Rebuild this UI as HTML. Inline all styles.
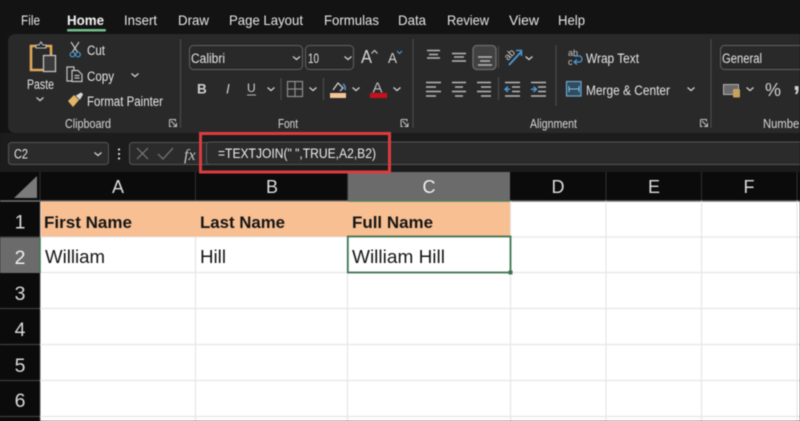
<!DOCTYPE html>
<html lang="en"><head><meta charset="utf-8"><title>Excel TEXTJOIN</title>
<style>
html,body{margin:0;padding:0;background:#131313;width:800px;height:421px;overflow:hidden}
svg{display:block;filter:blur(.5px)}
text{font-family:"Liberation Sans",sans-serif;fill:#e6e6e6;font-size:13.5px}
.tab{font-size:14px}
.lb{font-size:12.5px;fill:#d8d8d8}
.g{fill:none;stroke:#c4c4c4;stroke-width:1.2}
.l{stroke:#b8b8b8;stroke-width:1.6}
.s{stroke:#4a4a4a;stroke-width:1.2}
.h{fill:#dcdcdc;font-size:18px;text-anchor:middle}
.n{fill:#d8d8d8;font-size:19.5px;text-anchor:middle}
.b{fill:#151515;font-size:17px;font-weight:bold}
.t{fill:#151515;font-size:18px}
</style></head><body>
<svg width="800" height="421" viewBox="0 0 800 421" xmlns="http://www.w3.org/2000/svg">
<defs><path id="v" d="M-3.5-1.500 0 1.500 3.500-1.500" fill="none" stroke="#d0d0d0" stroke-width="1.300"/></defs>
<rect width="800" height="421" fill="#131313"/>
<!-- tabs -->
<text class="tab" x="21" y="25" textLength="19" lengthAdjust="spacingAndGlyphs">File</text>
<text class="tab" x="67" y="25" textLength="37" lengthAdjust="spacingAndGlyphs" style="font-weight:bold;fill:#f2f2f2">Home</text>
<text class="tab" x="124" y="25" textLength="33" lengthAdjust="spacingAndGlyphs">Insert</text>
<text class="tab" x="178" y="25" textLength="31" lengthAdjust="spacingAndGlyphs">Draw</text>
<text class="tab" x="229" y="25" textLength="74" lengthAdjust="spacingAndGlyphs">Page Layout</text>
<text class="tab" x="324" y="25" textLength="55" lengthAdjust="spacingAndGlyphs">Formulas</text>
<text class="tab" x="398" y="25" textLength="28" lengthAdjust="spacingAndGlyphs">Data</text>
<text class="tab" x="447" y="25" textLength="42" lengthAdjust="spacingAndGlyphs">Review</text>
<text class="tab" x="509" y="25" textLength="30" lengthAdjust="spacingAndGlyphs">View</text>
<text class="tab" x="558" y="25" textLength="27" lengthAdjust="spacingAndGlyphs">Help</text>
<rect x="67" y="29" width="39" height="2.500" rx="1" fill="#73c08e"/>
<!-- ribbon -->
<rect x="8" y="34" width="800" height="99" rx="7" fill="#292929"/>
<!-- paste -->
<path d="M31 46h20v24h-20z" fill="none" stroke="#e0a85a" stroke-width="2.600"/>
<path d="M36 47v-2h3l2-3 2 3h3v3h-10z" fill="#292929" stroke="#bdbdbd" stroke-width="1.100"/>
<rect x="43.500" y="55.500" width="12" height="16" fill="#3a3a3a" stroke="#c4c4c4" stroke-width="1.300"/>
<text x="27" y="89" textLength="27" lengthAdjust="spacingAndGlyphs">Paste</text>
<use href="#v" x="40" y="99"/>
<!-- clipboard commands -->
<path d="M71 42l6.500 10M79 42l-6.500 10" class="g"/>
<circle cx="72.500" cy="54.500" r="2.300" fill="none" stroke="#4d9ad6" stroke-width="1.200"/>
<circle cx="78" cy="54.500" r="2.300" fill="none" stroke="#4d9ad6" stroke-width="1.200"/>
<text x="87" y="55" textLength="18" lengthAdjust="spacingAndGlyphs">Cut</text>
<path d="M72 81h-5v-14h7v3" class="g"/><path d="M72 70.500h6l4 4v7h-10zM74.500 75.500h5M74.500 78h5" class="g"/>
<text x="87" y="81" textLength="27" lengthAdjust="spacingAndGlyphs">Copy</text>
<use href="#v" x="135" y="75"/>
<path d="M68 101l6-6 5 5-6 7z" fill="#e3b565"/><path d="M76 96l5-3 1.500 1.500-3 5" fill="#d8d8d8" stroke="#d8d8d8"/>
<text x="87" y="106" textLength="76" lengthAdjust="spacingAndGlyphs">Format Painter</text>
<text class="lb" x="65" y="128" textLength="46" lengthAdjust="spacingAndGlyphs">Clipboard</text>
<path id="la" d="M169.500 119.500h6v2M169.500 119.500v7h2M171 121l5.500 5.500M176.500 123v3.500h-3.500" fill="none" stroke="#c4c4c4"/>
<use href="#la" x="231.500"/><use href="#la" x="531"/>
<line x1="180.500" y1="39" x2="180.500" y2="128" class="s"/>
<!-- font -->
<rect x="189.500" y="45.500" width="113" height="24" rx="4" fill="#292929" stroke="#626262"/>
<text x="191" y="63" textLength="34" lengthAdjust="spacingAndGlyphs">Calibri</text>
<use href="#v" x="296.500" y="58"/>
<rect x="305.500" y="45.500" width="48" height="24" rx="4" fill="#292929" stroke="#626262"/>
<text x="308" y="63" textLength="11" lengthAdjust="spacingAndGlyphs">10</text>
<use href="#v" x="348" y="58"/>
<text x="361" y="63" textLength="11" lengthAdjust="spacingAndGlyphs" style="font-size:18px;fill:#d4d4d4">A</text>
<path d="M371.500 53.500l3-3 3 3" fill="none" stroke="#c8c8c8" stroke-width="1.200"/>
<text x="388" y="63" textLength="9" lengthAdjust="spacingAndGlyphs" style="font-size:15px;fill:#d4d4d4">A</text>
<path d="M397 51l2.500 2.500 2.500-2.500" fill="none" stroke="#4d9ad6" stroke-width="1.200"/>
<text x="197" y="93.500" style="font-size:13.500px;font-weight:bold;fill:#cfcfcf">B</text>
<text x="226" y="93.500" style="font-size:13.500px;font-style:italic;fill:#cfcfcf">I</text>
<text x="247" y="92" style="font-size:12px;fill:#cfcfcf">U</text>
<line x1="247" y1="95" x2="256" y2="95" stroke="#b5b5b5"/>
<use href="#v" x="271" y="89"/>
<line x1="281" y1="78" x2="281" y2="100" class="s"/>
<path d="M287.500 81.500h15v15h-15zM295 81.500v15M287.500 89h15" fill="none" stroke="#8d8d8d" stroke-width="1.200"/>
<use href="#v" x="313" y="89"/>
<line x1="323.500" y1="78" x2="323.500" y2="100" class="s"/>
<path d="M333 90l5-7 5 5-3 3" fill="none" stroke="#dcdcdc" stroke-width="1.200"/><path d="M343 84q3 2 2 6" fill="none" stroke="#4d9ad6" stroke-width="1.500"/>
<rect x="330" y="93" width="16" height="5" fill="#f3c69b"/>
<use href="#v" x="356" y="89"/>
<text x="372.500" y="92.500" style="font-size:15px;fill:#bdbdbd">A</text>
<rect x="370" y="93" width="17" height="5" fill="#c8101c"/>
<use href="#v" x="397" y="89"/>
<text class="lb" x="278" y="128" textLength="20" lengthAdjust="spacingAndGlyphs">Font</text>
<line x1="413" y1="39" x2="413" y2="128" class="s"/>
<!-- alignment -->
<path d="M427 50.500h13M429 54.500h9M427 58h13M452 53.500h14M454 57h10M452 61h14" class="l"/>
<rect x="473" y="45.500" width="23" height="24" rx="4" fill="#414141" stroke="#6e6e6e" stroke-width="1.300"/>
<path d="M478 57h14M480 61h10M478 65h14" class="l"/>
<line x1="498.500" y1="46" x2="498.500" y2="68" class="s"/>
<path d="M509 65l12-13" stroke="#4d9ad6" stroke-width="1.800"/><path d="M516 50.500h5.500v5.500" fill="none" stroke="#4d9ad6" stroke-width="1.500"/>
<text x="505" y="58" transform="rotate(-45 510 56)" style="font-size:10px;fill:#d0d0d0">ab</text>
<use href="#v" x="529" y="58"/>
<path d="M426 82.500h15M426 87h10M426 91.500h15M426 96h10M452 82.500h14M455 87h8M452 91.500h14M455 96h8M477 82.500h14M481 87h10M477 91.500h14M481 96h10" class="l"/>
<line x1="498.500" y1="77" x2="498.500" y2="100" class="s"/>
<path d="M505 82.500h15M512 87h8M512 91.500h8M505 96h15M531 82.500h15M538 87h8M538 91.500h8M531 96h15" class="l"/>
<path d="M505 89.250h5M508 86.500l-3 2.750 3 2.750M531 89.250h5M533.500 86.500l3 2.750-3 2.750" fill="none" stroke="#4d9ad6" stroke-width="1.400"/>
<line x1="556" y1="45" x2="556" y2="106" class="s"/>
<text x="568" y="56" style="font-size:9px;fill:#c8c8c8">ab</text><text x="568" y="65" style="font-size:9px;fill:#c8c8c8">c</text>
<path d="M574 62h6q2-1 2-3t-2-3h-6M577 59.500l-3 2.500 3 2.500" fill="none" stroke="#4d9ad6" stroke-width="1.200"/>
<text x="586" y="63" textLength="53" lengthAdjust="spacingAndGlyphs">Wrap Text</text>
<rect x="566.500" y="81.500" width="14.500" height="14.500" fill="#2f4b5e" stroke="#6ea6c9" stroke-width="1.200"/>
<path d="M569 89h10M569 86v6M579 86v6" stroke="#7fc0ea" fill="none"/>
<text x="586" y="95" textLength="84" lengthAdjust="spacingAndGlyphs">Merge &amp; Center</text>
<use href="#v" x="691" y="89"/>
<text class="lb" x="530" y="128" textLength="47" lengthAdjust="spacingAndGlyphs">Alignment</text>
<line x1="711" y1="39" x2="711" y2="128" class="s"/>
<!-- number -->
<rect x="720.500" y="45.500" width="90" height="24" rx="4" fill="#292929" stroke="#626262"/>
<text x="722" y="63" textLength="40" lengthAdjust="spacingAndGlyphs">General</text>
<rect x="723.500" y="84.500" width="15" height="10" fill="#6a6a6a" stroke="#b0b0b0"/>
<rect x="733" y="89" width="7" height="8.500" rx="1" fill="#c7a15e"/>
<use href="#v" x="750" y="89"/>
<text x="765" y="96" textLength="16" lengthAdjust="spacingAndGlyphs" style="font-size:18px;fill:#d4d4d4">%</text>
<text x="793" y="90" style="font-size:26px;font-weight:bold;fill:#d4d4d4">,</text>
<text class="lb" x="763" y="128" textLength="40" lengthAdjust="spacingAndGlyphs">Number</text>
<!-- formula bar -->
<rect x="0" y="133" width="800" height="39" fill="#1c1c1c"/>
<rect x="8.500" y="142.500" width="100" height="22" rx="3" fill="#2b2b2b" stroke="#555"/>
<text x="14" y="158.500" textLength="14" lengthAdjust="spacingAndGlyphs">C2</text>
<use href="#v" x="98" y="154"/>
<circle cx="119" cy="149.500" r="1.100" fill="#ddd"/><circle cx="119" cy="154" r="1.100" fill="#ddd"/><circle cx="119" cy="158.500" r="1.100" fill="#ddd"/>
<rect x="129.500" y="142.500" width="100" height="22" rx="3" fill="#2b2b2b" stroke="#555"/>
<path d="M137 148l11 11M148 148l-11 11" stroke="#6e6e6e" stroke-width="1.400"/>
<path d="M158 154l5 5 10-11" fill="none" stroke="#6e6e6e" stroke-width="1.400"/>
<text x="184" y="160" style="font-family:'Liberation Serif',serif;font-size:16px;font-style:italic;fill:#c8c8c8">fx</text>
<rect x="206.500" y="142" width="640" height="22.500" rx="3" fill="#2b2b2b" stroke="#555"/>
<text x="218" y="158" textLength="158" lengthAdjust="spacingAndGlyphs" style="font-size:13.500px;fill:#ececec">=TEXTJOIN(" ",TRUE,A2,B2)</text>
<!-- sheet -->
<rect x="0" y="172" width="800" height="249" fill="#0b0b0b"/>
<rect x="40" y="201" width="760" height="220" fill="#fff"/>
<rect x="348" y="172" width="162" height="29" fill="#6b6b6b"/>
<rect x="0" y="237" width="40" height="36" fill="#6b6b6b"/>
<polygon points="37,176 37,198 14,198" fill="#7a7a7a"/>
<path d="M40 172v29M195.500 172v29M347.500 172v29M606 172v29M701.500 172v29M797 172v29" stroke="#303030"/>
<line x1="0" y1="201" x2="800" y2="201" stroke="#6f6f6f" stroke-width="1.500"/>
<path d="M0 237h40M0 308.500h40M0 344.500h40M0 380.500h40M0 416.500h40" stroke="#3c3c3c" stroke-width="1.300"/>
<line x1="40" y1="201" x2="40" y2="421" stroke="#555"/>
<path d="M510 237h290M40 272.500h760M40 308.500h760M40 344.500h760M40 380.500h760M40 416.500h760M195.500 237v184M347.500 273v148M510.500 201v220M606 201v220M701.500 201v220M797 201v220" stroke="#e6e6e6" stroke-width="1.200" fill="none"/>
<rect x="41" y="201.500" width="469" height="35.500" fill="#f8bf92"/>
<line x1="195.500" y1="237" x2="195.500" y2="273" stroke="#e6e6e6" stroke-width="1.200"/>
<line x1="40" y1="237" x2="347" y2="237" stroke="#e6e6e6"/>
<rect x="347.800" y="236.500" width="162.700" height="36" fill="#fff" stroke="#3f7350" stroke-width="1.800"/>
<rect x="508.500" y="270.500" width="4" height="4" fill="#3f7350"/>
<line x1="348" y1="201" x2="510" y2="201" stroke="#4f7d5f" stroke-width="1.500"/>
<line x1="40" y1="237" x2="40" y2="273" stroke="#3f7350" stroke-width="1.500"/>
<text class="h" x="118" y="193">A</text><text class="h" x="272" y="193">B</text><text class="h" x="429" y="193" style="fill:#f0f0f0">C</text>
<text class="h" x="558" y="193">D</text><text class="h" x="654" y="193">E</text><text class="h" x="749" y="193">F</text>
<text class="n" x="20" y="228.500">1</text><text class="n" x="20" y="264" style="fill:#f0f0f0">2</text><text class="n" x="20" y="300">3</text>
<text class="n" x="20" y="336">4</text><text class="n" x="20" y="372">5</text><text class="n" x="20" y="407">6</text>
<text class="b" x="44" y="228" textLength="88" lengthAdjust="spacingAndGlyphs">First Name</text>
<text class="b" x="200" y="228" textLength="85" lengthAdjust="spacingAndGlyphs">Last Name</text>
<text class="b" x="352" y="228" textLength="81" lengthAdjust="spacingAndGlyphs">Full Name</text>
<text class="t" x="45" y="263" textLength="60" lengthAdjust="spacingAndGlyphs">William</text>
<text class="t" x="200" y="263" textLength="26" lengthAdjust="spacingAndGlyphs">Hill</text>
<text class="t" x="352" y="263" textLength="93" lengthAdjust="spacingAndGlyphs">William Hill</text>
<!-- red highlight -->
<rect x="200.500" y="133.500" width="189" height="38.500" fill="none" stroke="#dc3c3e" stroke-width="3"/>
</svg>
</body></html>
